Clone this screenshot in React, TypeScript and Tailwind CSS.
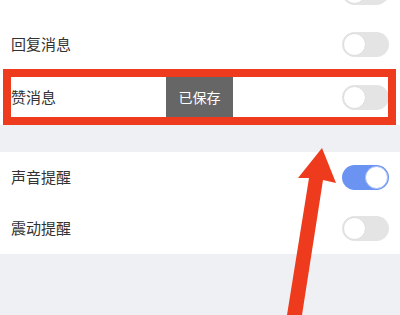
import React from "react";

function Toggle({ on }: { on?: boolean }) {
  return on ? (
    <div className="flex h-[25px] w-[47px] items-center justify-end rounded-full bg-[#6b93f2] pr-[1px]">
      <div className="h-[23px] w-[23px] rounded-full border border-[#a9bff5] bg-white" />
    </div>
  ) : (
    <div className="flex h-[25px] w-[47px] items-center justify-start rounded-full bg-[#e4e4e4] pl-[1px]">
      <div className="h-[23px] w-[23px] rounded-full border border-[#dcdcdc] bg-white" />
    </div>
  );
}

function Row({ label, on, h = "h-[52px]" }: { label: string; on?: boolean; h?: string }) {
  return (
    <div className={`flex ${h} items-center justify-between bg-white pl-[11px] pr-[11px]`}>
      <span className="text-[15px] text-[#333]">{label}</span>
      <Toggle on={on} />
    </div>
  );
}

export default function App() {
  return (
    <div
      className="relative h-[315px] w-[400px] overflow-hidden bg-[#eff0f4]"
      style={{ fontFamily: '"Noto Sans CJK SC", "Noto Sans", sans-serif' }}
    >
      <div className="-mt-[34px] flex flex-col">
        <Row label="评论消息" />
        <Row label="回复消息" />
        <div className="relative flex h-[55px] items-center justify-between bg-white pl-[11px] pr-[11px]">
          <span className="text-[15px] text-[#333]">赞消息</span>
          <Toggle />
          <div className="absolute left-[166px] top-0 flex h-full w-[67px] items-center justify-center bg-[#666666]">
            <span className="text-[14px] text-white">已保存</span>
          </div>
          <div className="pointer-events-none absolute -top-[1px] bottom-0 left-[3px] right-[4px] border-[8px] border-[#ee3b1d]" />
        </div>
        <div className="h-[27px]" />
        <Row label="声音提醒" on h="h-[51px]" />
        <Row label="震动提醒" h="h-[51px]" />
      </div>
      <svg className="absolute left-0 top-0" width="400" height="315" viewBox="0 0 400 315">
        <polygon
          points="322,148 336,183 323,180 302,315 287,315 309,178 298,178"
          fill="#ee3b1d"
        />
      </svg>
    </div>
  );
}
